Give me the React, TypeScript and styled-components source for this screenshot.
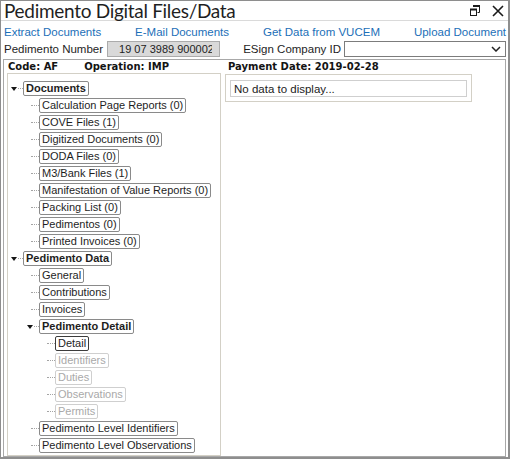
import React from 'react'
import styled, { createGlobalStyle } from 'styled-components'

const GlobalStyle = createGlobalStyle`
  html, body {
    margin: 0;
    padding: 0;
    background: #fff;
  }
  body {
    width: 510px;
    height: 459px;
    overflow: hidden;
  }
`

const Window = styled.div`
  box-sizing: border-box;
  width: 510px;
  height: 459px;
  display: flex;
  flex-direction: column;
  border: 1px solid #8e8e8e;
  border-right-width: 2px;
  border-bottom-width: 2px;
  background: #fff;
  font-family: "Liberation Sans", Arial, sans-serif;
  font-size: 11px;
  color: #1e1e1e;
`

const TitleBar = styled.div`
  flex: none;
  height: 19px;
  display: flex;
  align-items: center;
  padding: 0 4px 0 3px;
  border-bottom: 1px solid #dadada;
`

const Title = styled.div`
  font-family: Lato, "Open Sans", sans-serif;
  font-size: 19px;
  line-height: 19px;
  letter-spacing: -0.3px;
  color: #1f1f1f;
`

const TitleButtons = styled.div`
  margin-left: auto;
  display: flex;
  align-items: center;
  gap: 12px;
`

const IconButton = styled.span`
  display: flex;
  align-items: center;
  color: #1a1a1a;
`

const LinkRow = styled.div`
  flex: none;
  height: 15px;
  margin-top: 3px;
  display: flex;
  align-items: center;
  justify-content: space-between;
  padding: 0 2px 0 3px;
`

const ActionLink = styled.a`
  color: #1c6fb8;
  text-decoration: none;
  font-size: 11.5px;
  cursor: pointer;
`

const FieldRow = styled.div`
  flex: none;
  height: 16px;
  margin-top: 2px;
  display: flex;
  align-items: center;
  padding: 0 2px 0 3px;
`

const FieldLabel = styled.span<{ $push?: boolean }>`
  font-size: 11.5px;
  margin-right: ${p => (p.$push ? '3px' : '4px')};
  margin-left: ${p => (p.$push ? 'auto' : '0')};
  white-space: nowrap;
`

const ReadOnlyInput = styled.div`
  box-sizing: border-box;
  width: 113px;
  height: 16px;
  display: flex;
  align-items: center;
  padding: 0 7px 0 11px;
  background: #d9d9d9;
  border: 1px solid #ababab;
`

const InputText = styled.span`
  display: block;
  overflow: hidden;
  white-space: nowrap;
  font-size: 11px;
  color: #222;
`

const Select = styled.div`
  box-sizing: border-box;
  width: 162px;
  height: 16px;
  display: flex;
  align-items: center;
  justify-content: flex-end;
  padding-right: 4px;
  border: 1px solid #7c7c7c;
  background: #fff;
`

const Panel = styled.div`
  flex: 1;
  min-height: 0;
  margin: 2px 2px 0 2px;
  border: 1px solid #a8a8a8;
  display: flex;
  flex-direction: column;
  padding: 0 3px;
`

const PanelHeader = styled.div`
  flex: none;
  height: 13px;
  display: grid;
  grid-template-columns: 214px 1fr;
  column-gap: 4px;
  align-items: center;
  font-family: "DejaVu Sans", Verdana, sans-serif;
  font-weight: bold;
  font-size: 10px;
  color: #141414;
`

const HeaderGroup = styled.div`
  display: flex;
  gap: 26px;
  padding-left: 1px;
`

const HeaderCell = styled.div`
  padding-left: 3px;
`

const PanelBody = styled.div`
  flex: 1;
  min-height: 0;
  display: grid;
  grid-template-columns: 214px 247px;
  column-gap: 4px;
  align-items: start;
`

const TreeBox = styled.div`
  box-sizing: border-box;
  height: 383px;
  border: 1px solid #d3d0c6;
  padding-top: 6px;
  display: flex;
  flex-direction: column;
`

const TreeRow = styled.div<{ $level: number }>`
  height: 17px;
  display: flex;
  align-items: center;
  padding-left: ${p => (p.$level - 1) * 16}px;
`

const Gutter = styled.div<{ $expander?: boolean }>`
  width: 15px;
  height: 15px;
  flex: none;
  display: flex;
  align-items: center;
  justify-content: flex-end;
  padding-left: ${p => (p.$expander ? '3px' : '0')};
  box-sizing: border-box;
`

const Arrow = styled.span`
  width: 0;
  height: 0;
  flex: none;
  border-left: 3px solid transparent;
  border-right: 3px solid transparent;
  border-top: 4px solid #151515;
`

const Dots = styled.span<{ $fill?: boolean }>`
  height: 0;
  width: ${p => (p.$fill ? 'auto' : '8px')};
  flex: ${p => (p.$fill ? '1' : 'none')};
  margin-left: ${p => (p.$fill ? '1px' : '0')};
  border-top: 1px dotted #a4a4a4;
`

const NodeBox = styled.span<{ $bold?: boolean; $disabled?: boolean; $selected?: boolean }>`
  box-sizing: border-box;
  height: 15px;
  line-height: 13px;
  padding: 0 2px;
  border: 1px solid
    ${p => (p.$disabled ? '#cfcfcf' : p.$selected ? '#3c3c3c' : '#8a8a8a')};
  border-radius: 2px;
  white-space: nowrap;
  font-weight: ${p => (p.$bold ? 'bold' : 'normal')};
  color: ${p => (p.$disabled ? '#a9a9a9' : '#1e1e1e')};
`

const InfoBox = styled.div`
  box-sizing: border-box;
  border: 1px solid #d3d0c6;
  padding: 5px 4px 4px;
  margin-top: 1px;
`

const EmptyField = styled.div`
  box-sizing: border-box;
  height: 17px;
  border: 1px solid #cfcfcf;
  padding-left: 3px;
  display: flex;
  align-items: center;
  font-size: 11.5px;
  color: #222;
`

type Node = {
  label: string
  level: number
  bold?: boolean
  expanded?: boolean
  disabled?: boolean
  selected?: boolean
}

const nodes: Node[] = [
  { label: 'Documents', level: 1, bold: true, expanded: true },
  { label: 'Calculation Page Reports (0)', level: 2 },
  { label: 'COVE Files (1)', level: 2 },
  { label: 'Digitized Documents (0)', level: 2 },
  { label: 'DODA Files (0)', level: 2 },
  { label: 'M3/Bank Files (1)', level: 2 },
  { label: 'Manifestation of Value Reports (0)', level: 2 },
  { label: 'Packing List (0)', level: 2 },
  { label: 'Pedimentos (0)', level: 2 },
  { label: 'Printed Invoices (0)', level: 2 },
  { label: 'Pedimento Data', level: 1, bold: true, expanded: true },
  { label: 'General', level: 2 },
  { label: 'Contributions', level: 2 },
  { label: 'Invoices', level: 2 },
  { label: 'Pedimento Detail', level: 2, bold: true, expanded: true },
  { label: 'Detail', level: 3, selected: true },
  { label: 'Identifiers', level: 3, disabled: true },
  { label: 'Duties', level: 3, disabled: true },
  { label: 'Observations', level: 3, disabled: true },
  { label: 'Permits', level: 3, disabled: true },
  { label: 'Pedimento Level Identifiers', level: 2 },
  { label: 'Pedimento Level Observations', level: 2 },
]

const RestoreIcon = () => (
  <svg width="10" height="11" viewBox="0 0 10 11">
    <rect x="3" y="0" width="7" height="2" fill="currentColor" />
    <path d="M9.5 2V7.5H7.5" fill="none" stroke="currentColor" />
    <rect x="0" y="3.5" width="7" height="2" fill="currentColor" />
    <rect x="0.5" y="4.5" width="6" height="6" fill="none" stroke="currentColor" />
  </svg>
)

const CloseIcon = () => (
  <svg width="12" height="12" viewBox="0 0 12 12">
    <path d="M1 1L11 11M11 1L1 11" stroke="currentColor" strokeWidth="1.6" />
  </svg>
)

const Chevron = () => (
  <svg width="10" height="6" viewBox="0 0 10 6">
    <path d="M1 1L5 5L9 1" fill="none" stroke="#222" strokeWidth="1.5" />
  </svg>
)

export default function App() {
  return (
    <>
      <GlobalStyle />
      <Window>
        <TitleBar>
          <Title>Pedimento Digital Files/Data</Title>
          <TitleButtons>
            <IconButton><RestoreIcon /></IconButton>
            <IconButton><CloseIcon /></IconButton>
          </TitleButtons>
        </TitleBar>

        <LinkRow>
          <ActionLink>Extract Documents</ActionLink>
          <ActionLink>E-Mail Documents</ActionLink>
          <ActionLink>Get Data from VUCEM</ActionLink>
          <ActionLink>Upload Document</ActionLink>
        </LinkRow>

        <FieldRow>
          <FieldLabel>Pedimento Number</FieldLabel>
          <ReadOnlyInput>
            <InputText>19 07 3989 9000024</InputText>
          </ReadOnlyInput>
          <FieldLabel $push>ESign Company ID</FieldLabel>
          <Select>
            <Chevron />
          </Select>
        </FieldRow>

        <Panel>
          <PanelHeader>
            <HeaderGroup>
              <span>Code: AF</span>
              <span>Operation: IMP</span>
            </HeaderGroup>
            <HeaderCell>Payment Date: 2019-02-28</HeaderCell>
          </PanelHeader>
          <PanelBody>
            <TreeBox>
              {nodes.map(n => (
                <TreeRow key={n.label} $level={n.level}>
                  <Gutter $expander={n.expanded}>
                    {n.expanded && <Arrow />}
                    <Dots $fill={n.expanded} />
                  </Gutter>
                  <NodeBox $bold={n.bold} $disabled={n.disabled} $selected={n.selected}>
                    {n.label}
                  </NodeBox>
                </TreeRow>
              ))}
            </TreeBox>
            <InfoBox>
              <EmptyField>No data to display...</EmptyField>
            </InfoBox>
          </PanelBody>
        </Panel>
      </Window>
    </>
  )
}
